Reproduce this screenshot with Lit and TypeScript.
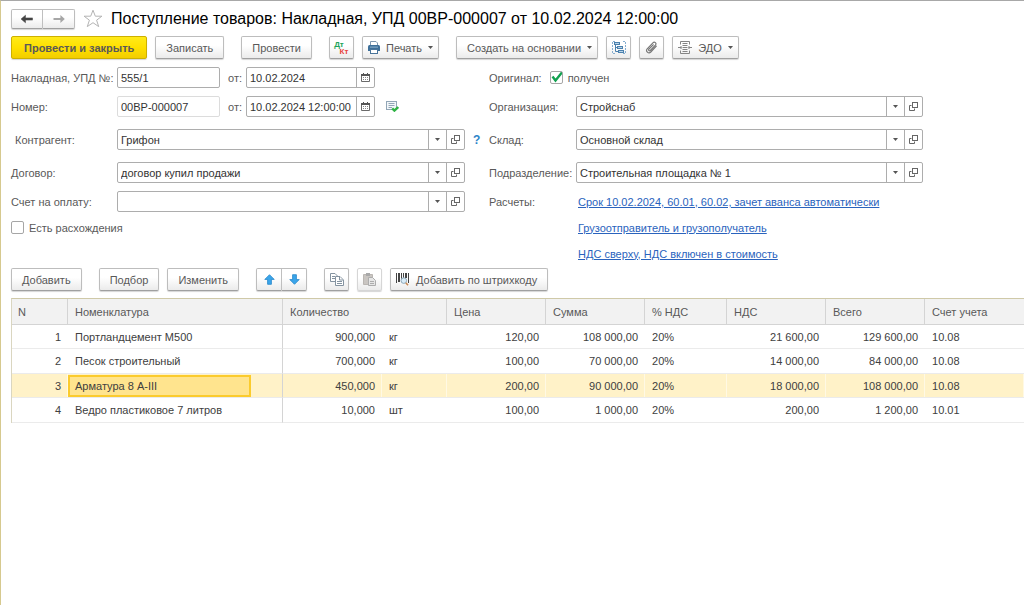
import { LitElement, html, css, nothing } from "lit";
import { customElement, state } from "lit/decorators.js";
import { classMap } from "lit/directives/class-map.js";

interface Line {
  name: string;
  qty: string;
  unit: string;
  price: string;
  sum: string;
  rate: string;
  vat: string;
  total: string;
  account: string;
}

const LINES: Line[] = [
  { name: "Портландцемент М500", qty: "900,000", unit: "кг", price: "120,00", sum: "108 000,00", rate: "20%", vat: "21 600,00", total: "129 600,00", account: "10.08" },
  { name: "Песок строительный", qty: "700,000", unit: "кг", price: "100,00", sum: "70 000,00", rate: "20%", vat: "14 000,00", total: "84 000,00", account: "10.08" },
  { name: "Арматура 8 А-III", qty: "450,000", unit: "кг", price: "200,00", sum: "90 000,00", rate: "20%", vat: "18 000,00", total: "108 000,00", account: "10.08" },
  { name: "Ведро пластиковое 7 литров", qty: "10,000", unit: "шт", price: "100,00", sum: "1 000,00", rate: "20%", vat: "200,00", total: "1 200,00", account: "10.01" },
];

const icons = {
  back: html`<svg width="14" height="10" viewBox="0 0 14 10"><path d="M1 5 L5.5 1.2 V3.9 H12.5 V6.1 H5.5 V8.8 Z" fill="#444" stroke="#444" stroke-width=".5" stroke-linejoin="round"/></svg>`,
  forward: html`<svg width="14" height="10" viewBox="0 0 14 10"><path d="M12.8 5 L8.4 .9 V4 H1.5 V6 H8.4 V9.1 Z" fill="#a6a6a6"/></svg>`,
  star: html`<svg width="20" height="19" viewBox="0 0 20 19"><path d="M10 1.2 L12.3 7.2 H18.9 L13.6 11.2 L15.7 17.6 L10 13.7 L4.3 17.6 L6.4 11.2 L1.1 7.2 H7.7 Z" fill="#fff" stroke="#b4b4b4"/></svg>`,
  caret: html`<svg width="5" height="3" viewBox="0 0 5 3"><path d="M0 0 H5 L2.5 3 Z" fill="#555"/></svg>`,
  open: html`<svg width="9" height="9" viewBox="0 0 9 9" fill="none" stroke="#666"><rect x="3.5" y=".5" width="5" height="5"/><path d="M2.5 3.5 H.5 V8.5 H5.5 V6.5"/></svg>`,
  calendar: html`<svg width="9" height="9" viewBox="0 0 9 9"><path d="M.5 1.5 H8.5 V8.5 H.5 Z" fill="#fff" stroke="#6a6a6a"/><path d="M0 1 H9 V3 H0 Z M2 0 H3 V1 H2 Z M6 0 H7 V1 H6 Z" fill="#555"/><path d="M2 4.5 H7 M2 6.5 H7" stroke="#888" stroke-dasharray="1 1"/></svg>`,
  printer: html`<svg width="12" height="13" viewBox="0 0 12 13"><path d="M3 .5 H8 L9.5 2 V5 H2.5 V.5 Z" fill="#fff" stroke="#7f98b0"/><path d="M1.5 4 H10.5 Q12 4 12 5.5 V10 H0 V5.5 Q0 4 1.5 4 Z" fill="#3d6f99"/><rect x="2" y="5.6" width="8" height="1" fill="#8fb3d0"/><rect x="2.5" y="8.5" width="7" height="4" fill="#fff" stroke="#49749a"/></svg>`,
  tree: html`<svg width="14" height="13" viewBox="0 0 14 13" fill="none" stroke="#4a80ad"><path d="M3 .5 H.5 V12.5 H3 M11 .5 H13.5 V12.5 H11" stroke="#86aed0" stroke-dasharray="2 1"/><rect x="2.5" y="1.5" width="5" height="2" fill="#b9d3e8"/><rect x="5.5" y="5.5" width="5" height="2" fill="#b9d3e8"/><rect x="6.5" y="9.5" width="5" height="2" fill="#b9d3e8"/><path d="M3.5 4 V10.5 H6 M3.5 6.5 H5"/></svg>`,
  clip: html`<svg width="13" height="13" viewBox="0 0 13 13" fill="none" stroke="#777" stroke-width="1.2" stroke-linecap="round"><path d="M11.3 5.2 L5.8 11 C3.6 13.2 0 10.2 2.2 7.8 L7.9 1.8 C9.5 .2 12 2.2 10.4 4.1 L5.3 9.5 C4.4 10.3 3 9.2 3.9 8.2 L8.2 3.8"/></svg>`,
  edo: html`<svg width="14" height="13" viewBox="0 0 14 13" fill="none" stroke="#858585"><path d="M2.5 3.5 V.5 H11.5 V3.5 M2.5 9.5 V12.5 H11.5 V9.5 M4.5 2.5 H9.5 M4.5 4.5 H9.5 M4.5 8.5 H9.5 M4.5 10.5 H9.5"/><path d="M0 6.5 H3.5 M5 6.5 H9 M10.5 6.5 H14"/><path d="M2.5 5 L4 6.5 L2.5 8 M11.5 5 L10 6.5 L11.5 8"/></svg>`,
  posted: html`<svg width="13" height="11" viewBox="0 0 13 11"><rect x=".5" y=".5" width="10" height="8" fill="#f3f7fa" stroke="#92a6b6"/><path d="M2.5 2.5 H8.5 M2.5 4.5 H8.5 M2.5 6.5 H6" stroke="#92a6b6"/><path d="M6.2 7.4 L8.4 9.6 L12.2 6" fill="none" stroke="#2fb344" stroke-width="2.4"/></svg>`,
  up: html`<svg width="11" height="11" viewBox="0 0 11 11"><path d="M5.5 .7 L10.2 5.4 H7.4 V10.3 H3.6 V5.4 H.8 Z" fill="#3aa5ea" stroke="#2385c9" stroke-linejoin="round" stroke-width=".8"/></svg>`,
  down: html`<svg width="11" height="11" viewBox="0 0 11 11"><path d="M5.5 10.3 L10.2 5.6 H7.4 V.7 H3.6 V5.6 H.8 Z" fill="#3aa5ea" stroke="#2385c9" stroke-linejoin="round" stroke-width=".8"/></svg>`,
  copy: html`<svg width="14" height="13" viewBox="0 0 14 13" fill="#fff" stroke="#8493a0"><path d="M.5 .5 H5 L7.5 3 V8.5 H.5 Z"/><path d="M2 3.5 H5 M2 5.5 H5"/><path d="M5.5 3.5 H10 L13.5 7 V12.5 H5.5 Z"/><path d="M9.5 4 V7 H13 M7 8.5 H12 M7 10.5 H12"/></svg>`,
  paste: html`<svg width="13" height="13" viewBox="0 0 13 13"><path d="M.5 1.5 H9.5 V11.5 H.5 Z" fill="#c9c5c1" stroke="#bab6b2"/><rect x="3" y="0" width="4" height="3" fill="#a9a9a9"/><path d="M5.5 4.5 H9.5 L12.5 7.5 V12.5 H5.5 Z" fill="#e6e6e6" stroke="#adadad"/><path d="M7 8.5 H11 M7 10.5 H11" stroke="#adadad"/></svg>`,
  barcode: html`<svg width="14" height="13" viewBox="0 0 14 13"><path d="M0 0 H1 V10 H0 Z M2 0 H4 V9 H2 Z M5 0 H6 V9 H5 Z M7 0 H8 V5 H7 Z M9 0 H11 V5 H9 Z M12 0 H13 V10 H12 Z" fill="#444"/><circle cx="7.8" cy="7.6" r="2.8" fill="#d9ecf8" stroke="#8fa9ba"/><path d="M9.8 9.8 L12 12.2" stroke="#c98a55" stroke-width="1.6"/></svg>`,
};

@customElement("app-root")
export class AppRoot extends LitElement {
  @state() private current = 2;

  static styles = css`
    :host {
      display: block;
      font: 11px/14px "Liberation Sans", Arial, sans-serif;
      color: #595959;
    }
    * { box-sizing: border-box; }
    .page {
      min-height: 100vh;
      padding: 7px 0 0 10px;
      border-top: 1px solid #a8a8a8;
      border-left: 1px solid #d6c98f;
      background: #fff;
    }
    svg { display: block; flex: none; }
    button, input, select {
      font: inherit;
      color: inherit;
      margin: 0;
    }
    .title-bar { display: flex; align-items: center; height: 21px; gap: 8px; }
    h1 { margin: 0; font-size: 16px; line-height: 20px; font-weight: 400; color: #000; white-space: nowrap; }
    .star { padding: 0; border: 0; background: none; }
    .bar { display: flex; height: 23px; gap: 8px; }
    .commands { margin-top: 7px; }
    .lines-bar { margin-top: 4px; }
    .group { display: flex; gap: 8px; margin-right: 9px; }
    .btn {
      display: flex;
      align-items: center;
      justify-content: center;
      gap: 6px;
      padding: 0 10px;
      border: 1px solid #bdbdbd;
      border-bottom-color: #a0a0a0;
      border-radius: 2px;
      background: linear-gradient(#fff 40%, #ebebeb);
      box-shadow: 0 1px 1px #d5d5d5;
      white-space: nowrap;
    }
    .btn.main {
      padding: 0 12px;
      border-color: #cdb000;
      background: linear-gradient(#ffea1a, #ffe000 50%, #f2cd00);
      font-weight: 700;
    }
    .btn.icon { width: 25px; padding: 0; }
    .btn.iconic { padding-left: 5px; }
    .btn.menu { padding-right: 5px; }
    .btn:disabled { border-color: #d6d6d6; }
    .pair { display: flex; }
    .pair .btn { width: 26px; padding: 0; }
    .pair .btn:first-child { border-radius: 2px 0 0 2px; }
    .pair .btn:last-child { width: 25px; border-radius: 0 2px 2px 0; border-left: 0; }
    .pair.nav { height: 20px; }
    .pair.nav .btn { width: 32px; }
    .dtkt { display: grid; font-size: 8px; line-height: 7px; font-weight: 700; }
    .dt { color: #1ea35a; padding-right: 5px; }
    .kt { color: #e8443f; padding-left: 5px; }

    .form {
      display: grid;
      grid-template-columns: minmax(0, 478fr) minmax(0, 434fr);
      margin: 8px 101px 0 0;
    }
    .row { display: flex; align-items: center; height: 21px; margin-top: 8px; white-space: nowrap; }
    .row:first-child { margin-top: 0; }
    .row.far { margin-top: 12px; }
    .row.tight { margin-top: 5px; }
    .cap { width: 106px; flex: none; }
    .right .cap { width: 87px; }
    .cap.inset { padding-left: 4px; }
    .from { width: 26px; padding-left: 8px; flex: none; }
    .field {
      display: flex;
      height: 21px;
      min-width: 0;
      border: 1px solid #adadad;
      border-radius: 2px;
      background: #fff;
      color: #333;
    }
    .field.grow { flex: 1; }
    .left .field.grow { margin-right: 8px; }
    .field.number { width: 103px; }
    .field.date { width: 129px; }
    .field.muted { border-color: #dcdcdc; }
    .field input, .field select {
      flex: 1;
      width: 100%;
      min-width: 0;
      padding: 0 3px;
      border: 0;
      outline: 0;
      background: none;
      appearance: none;
    }
    .choice { flex: 1; display: grid; grid-template-columns: minmax(0, 1fr) 18px; }
    .choice select { grid-area: 1 / 1 / 2 / 3; }
    .choice .drop {
      grid-area: 1 / 2;
      display: grid;
      place-items: center;
      border-left: 1px solid #adadad;
      pointer-events: none;
    }
    .side {
      display: grid;
      place-items: center;
      width: 18px;
      padding: 0;
      border: 0;
      border-left: 1px solid #adadad;
      background: none;
    }
    .state { margin-left: 11px; }
    .help { width: 16px; padding: 0; border: 0; background: none; color: #2d84c8; font-size: 12px; font-weight: 700; text-align: left; }
    .check { display: flex; align-items: center; gap: 5px; }
    .original { margin-left: 8px; }
    .check input {
      appearance: none;
      width: 13px;
      height: 13px;
      margin: 0;
      border: 1px solid #a6a6a6;
      border-radius: 2px;
      background: #fff;
    }
    .check input:checked {
      background: url("data:image/svg+xml,%3Csvg xmlns='http://www.w3.org/2000/svg' viewBox='0 0 13 13'%3E%3Cpath d='M2.5 5.5 L5.5 9.5 L12.5 .8' fill='none' stroke='%2312a150' stroke-width='2.4'/%3E%3C/svg%3E") border-box;
    }
    a { color: #2a63bd; text-decoration: underline; }
    .row a { margin-left: 2px; }

    table {
      width: 100%;
      margin-top: 7px;
      border-collapse: separate;
      border-spacing: 0;
      table-layout: fixed;
      border-top: 1px solid #cfc9a8;
      border-left: 1px solid #dad6c0;
      color: #404040;
    }
    th {
      height: 26px;
      padding: 0 7px;
      border-right: 1px solid #d4d4d4;
      border-bottom: 1px solid #d4d4d4;
      background: #f2f2f2;
      color: #595959;
      font-weight: 400;
      text-align: left;
    }
    th:first-child { padding-left: 6px; }
    th:last-child { border-right: 0; }
    td {
      height: 24px;
      padding: 0 7px;
      border-bottom: 1px solid #ebebeb;
      white-space: nowrap;
    }
    tr:nth-child(even) td { height: 25px; }
    .num { text-align: right; }
    .name { border-right: 1px solid #d4d4d4; padding: 0; }
    .cell { display: flex; align-items: center; width: 183px; height: 22px; padding-left: 7px; }
    .on td { background: #fff2c8; box-shadow: inset -1px 0 #fff9e4; }
    .on td.name { box-shadow: none; }
    .on .cell { border: 2px solid #fbcb2d; padding-left: 5px; background: #ffe48e; }
    .c-n { width: 56px; }
    .c-name { width: 215px; }
    .c-unit { width: 65px; }
    .c-rate { width: 82px; }
    .c-sum { width: 99px; }
    .c-qty { width: 99px; }
  `;

  private choice(id: string, caption: string, value: string, opts: { far?: boolean; inset?: boolean; help?: boolean; left?: boolean } = {}) {
    return html`
      <div class=${classMap({ row: true, far: !!opts.far })}>
        <label class=${classMap({ cap: true, inset: !!opts.inset })} for=${id}>${caption}</label>
        <div class="field grow">
          <div class="choice">
            <select id=${id}><option>${value}</option></select>
            <span class="drop">${icons.caret}</span>
          </div>
          <button class="side" aria-label="Открыть">${icons.open}</button>
        </div>
        ${opts.help ? html`<button class="help">?</button>` : opts.left ? html`<span class="help"></span>` : nothing}
      </div>`;
  }

  private date(id: string, value: string) {
    return html`
      <label class="from" for=${id}>от:</label>
      <div class="field date">
        <input id=${id} .value=${value} />
        <button class="side" aria-label="Календарь">${icons.calendar}</button>
      </div>`;
  }

  render() {
    return html`
      <main class="page">
        <header class="title-bar">
          <div class="pair nav">
            <button class="btn" aria-label="Назад">${icons.back}</button>
            <button class="btn" aria-label="Вперед">${icons.forward}</button>
          </div>
          <button class="star" aria-label="В избранное">${icons.star}</button>
          <h1>Поступление товаров: Накладная, УПД 00ВР-000007 от 10.02.2024 12:00:00</h1>
        </header>

        <div class="bar commands">
          <div class="group">
            <button class="btn main">Провести и закрыть</button>
            <button class="btn">Записать</button>
          </div>
          <div class="group"><button class="btn">Провести</button></div>
          <div class="group">
            <button class="btn icon" aria-label="Дебет и кредит">
              <span class="dtkt"><span class="dt">Дт</span><span class="kt">Кт</span></span>
            </button>
            <button class="btn iconic menu">${icons.printer}Печать${icons.caret}</button>
          </div>
          <div class="group">
            <button class="btn menu">Создать на основании${icons.caret}</button>
            <button class="btn icon" aria-label="Структура подчиненности">${icons.tree}</button>
            <button class="btn icon" aria-label="Файлы">${icons.clip}</button>
            <button class="btn iconic menu">${icons.edo}ЭДО${icons.caret}</button>
          </div>
        </div>

        <section class="form">
          <div class="left">
            <div class="row">
              <label class="cap" for="invoice">Накладная, УПД №:</label>
              <div class="field number"><input id="invoice" .value=${"555/1"} /></div>
              ${this.date("invoice-date", "10.02.2024")}
            </div>
            <div class="row">
              <label class="cap" for="number">Номер:</label>
              <div class="field number muted"><input id="number" .value=${"00ВР-000007"} /></div>
              ${this.date("number-date", "10.02.2024 12:00:00")}
              <span class="state">${icons.posted}</span>
            </div>
            ${this.choice("partner", "Контрагент:", "Грифон", { far: true, inset: true, left: true, help: true })}
            ${this.choice("contract", "Договор:", "договор купил продажи", { far: true, left: true })}
            ${this.choice("bill", "Счет на оплату:", "", { left: true })}
            <div class="row tight">
              <label class="check"><input type="checkbox" />Есть расхождения</label>
            </div>
          </div>
          <div class="right">
            <div class="row">
              <label for="original">Оригинал:</label>
              <label class="check original"><input id="original" type="checkbox" checked />получен</label>
            </div>
            ${this.choice("org", "Организация:", "Стройснаб")}
            ${this.choice("store", "Склад:", "Основной склад", { far: true })}
            ${this.choice("dept", "Подразделение:", "Строительная площадка № 1", { far: true })}
            <div class="row"><span class="cap">Расчеты:</span><a href="#">Срок 10.02.2024, 60.01, 60.02, зачет аванса автоматически</a></div>
            <div class="row tight"><span class="cap"></span><a href="#">Грузоотправитель и грузополучатель</a></div>
            <div class="row tight"><span class="cap"></span><a href="#">НДС сверху, НДС включен в стоимость</a></div>
          </div>
        </section>

        <div class="bar lines-bar">
          <div class="group"><button class="btn">Добавить</button></div>
          <div class="group">
            <button class="btn">Подбор</button>
            <button class="btn">Изменить</button>
          </div>
          <div class="group">
            <div class="pair">
              <button class="btn" aria-label="Вверх">${icons.up}</button>
              <button class="btn" aria-label="Вниз">${icons.down}</button>
            </div>
          </div>
          <div class="group">
            <button class="btn icon" aria-label="Копировать">${icons.copy}</button>
            <button class="btn icon" aria-label="Вставить" disabled>${icons.paste}</button>
            <button class="btn iconic">${icons.barcode}Добавить по штрихкоду</button>
          </div>
        </div>

        <table>
          <colgroup>
            <col class="c-n" /><col class="c-name" /><col class="c-qty" /><col class="c-unit" />
            <col class="c-sum" /><col class="c-sum" /><col class="c-rate" /><col class="c-sum" />
            <col class="c-sum" /><col />
          </colgroup>
          <thead>
            <tr>
              <th>N</th><th>Номенклатура</th><th colspan="2">Количество</th><th>Цена</th><th>Сумма</th>
              <th>% НДС</th><th>НДС</th><th>Всего</th><th>Счет учета</th>
            </tr>
          </thead>
          <tbody>
            ${LINES.map((l, i) => html`
              <tr class=${classMap({ on: i === this.current })} @click=${() => (this.current = i)}>
                <td class="num">${i + 1}</td>
                <td class="name"><div class="cell">${l.name}</div></td>
                <td class="num">${l.qty}</td>
                <td>${l.unit}</td>
                <td class="num">${l.price}</td>
                <td class="num">${l.sum}</td>
                <td>${l.rate}</td>
                <td class="num">${l.vat}</td>
                <td class="num">${l.total}</td>
                <td>${l.account}</td>
              </tr>`)}
          </tbody>
        </table>
      </main>`;
  }
}
